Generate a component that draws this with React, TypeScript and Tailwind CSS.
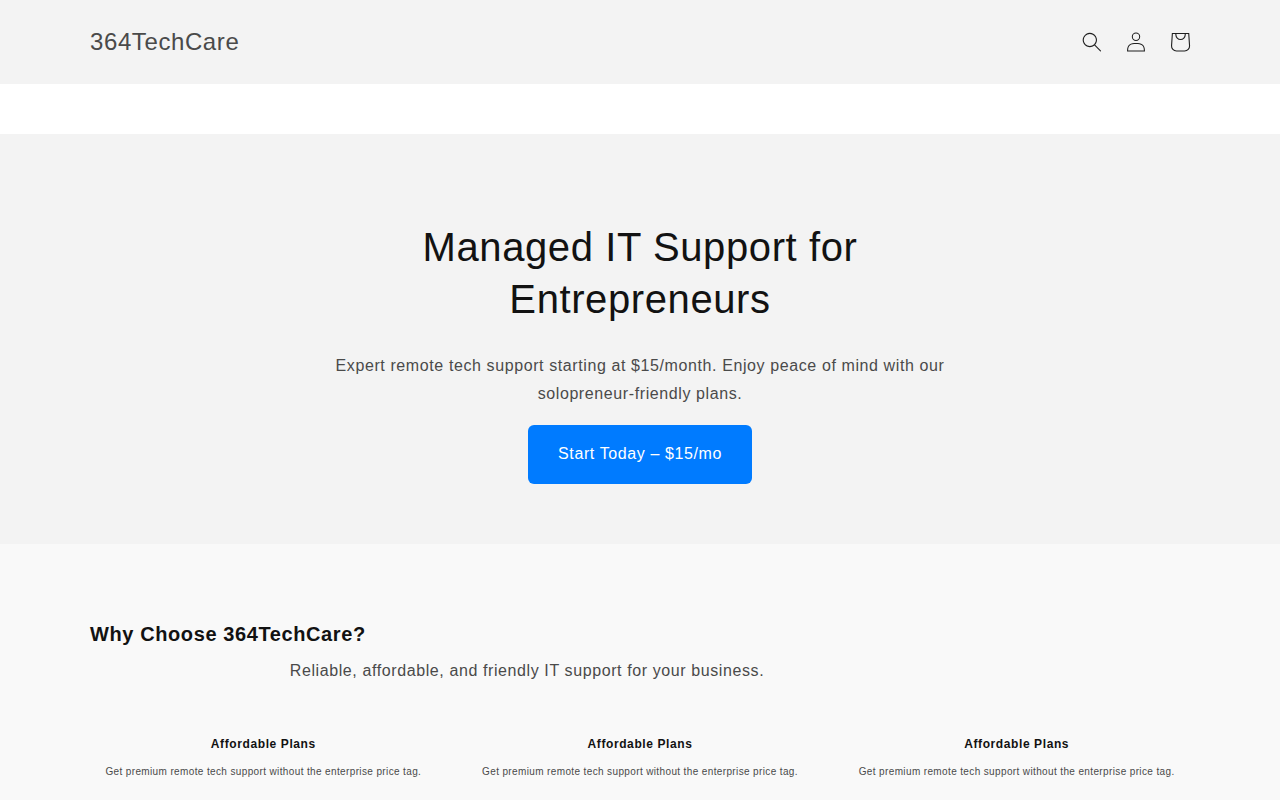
const features = [
  { title: "Affordable Plans", text: "Get premium remote tech support without the enterprise price tag." },
  { title: "Affordable Plans", text: "Get premium remote tech support without the enterprise price tag." },
  { title: "Affordable Plans", text: "Get premium remote tech support without the enterprise price tag." },
];

function SearchIcon() {
  return (
    <svg viewBox="0 0 18 19" className="w-5 h-5" fill="currentColor">
      <path
        fillRule="evenodd"
        clipRule="evenodd"
        d="M11.03 11.68A5.784 5.784 0 112.85 3.5a5.784 5.784 0 018.18 8.18zm.26 1.12a6.78 6.78 0 11.72-.7l5.4 5.4a.5.5 0 11-.71.7l-5.41-5.4z"
      />
    </svg>
  );
}

function AccountIcon() {
  return (
    <svg viewBox="0 0 18 19" className="w-5 h-5" fill="currentColor">
      <path
        fillRule="evenodd"
        clipRule="evenodd"
        d="M6 4.5a3 3 0 116 0 3 3 0 01-6 0zm3-4a4 4 0 100 8 4 4 0 000-8zm5.58 12.15c1.12.82 1.83 2.24 1.91 4.85H1.51c.08-2.6.79-4.03 1.9-4.85C4.66 11.75 6.5 11.5 9 11.5s4.35.26 5.58 1.15zM9 10.5c-2.5 0-4.65.24-6.17 1.35C1.27 12.98.5 14.93.5 18v.5h17V18c0-3.07-.77-5.02-2.33-6.15-1.52-1.1-3.67-1.35-6.17-1.35z"
      />
    </svg>
  );
}

function CartIcon() {
  return (
    <svg viewBox="0 0 40 40" className="w-11 h-11 shrink-0" fill="currentColor">
      <path
        fillRule="evenodd"
        clipRule="evenodd"
        d="m15.75 11.8h-3.16l-.77 11.6a5 5 0 0 0 4.99 5.34h7.38a5 5 0 0 0 4.99-5.33l-.78-11.61zm0 1h-2.22l-.71 10.67a4 4 0 0 0 3.99 4.27h7.38a4 4 0 0 0 4-4.27l-.72-10.67h-2.22v.63a4.75 4.75 0 1 1-9.5 0zm8.5 0h-7.5v.63a3.75 3.75 0 1 0 7.5 0z"
      />
    </svg>
  );
}

export default function App() {
  return (
    <div className="h-[800px] overflow-hidden bg-white font-['Liberation_Sans',Arial,sans-serif] tracking-[0.6px] text-[#121212]">
      {/* Header */}
      <header className="h-[84px] bg-[#f3f3f3] pl-[90px] pr-[78px] flex items-center justify-between">
        <a className="text-2xl text-[#4a4a4a]">364TechCare</a>
        <div className="flex items-center text-[#1f1f1f]">
          <div className="w-11 h-11 flex items-center justify-center"><SearchIcon /></div>
          <div className="w-11 h-11 flex items-center justify-center"><AccountIcon /></div>
          <div className="w-11 h-11 flex items-center justify-center"><CartIcon /></div>
        </div>
      </header>

      <div className="h-[50px]" />

      {/* Hero */}
      <section className="h-[410px] bg-[#f3f3f3] pt-[87px] flex flex-col items-center text-center">
        <h1 className="w-[480px] text-[40px] leading-[52px] font-normal">
          Managed IT Support for Entrepreneurs
        </h1>
        <p className="w-[640px] mt-[27px] text-base leading-7 text-[#4a4a4a]">
          Expert remote tech support starting at $15/month. Enjoy peace of mind with our solopreneur-friendly plans.
        </p>
        <a className="mt-[17px] w-[224px] h-[59px] pb-[2px] rounded-md bg-[#007bff] text-white text-base flex items-center justify-center">
          Start Today – $15/mo
        </a>
      </section>

      {/* Features */}
      <section className="h-[300px] bg-[#f9f9f9] px-[90px] pt-[78px]">
        <h2 className="text-xl leading-6 font-bold">Why Choose 364TechCare?</h2>
        <p className="w-[874px] mt-[13px] text-base leading-6 text-center text-[#4a4a4a]">
          Reliable, affordable, and friendly IT support for your business.
        </p>
        <div className="grid grid-cols-3 gap-[30px] mt-[53px]">
          {features.map((f, i) => (
            <div key={i} className="text-center">
              <h3 className="text-xs leading-4 font-bold">{f.title}</h3>
              <p className="mt-[13px] text-[10px] leading-[14px] tracking-[0.37px] text-[#4a4a4a]">{f.text}</p>
            </div>
          ))}
        </div>
      </section>
    </div>
  );
}
